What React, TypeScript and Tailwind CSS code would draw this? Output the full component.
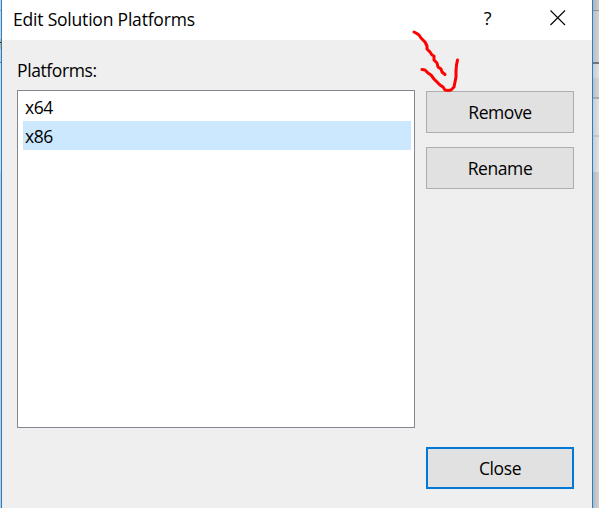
import type { ReactNode } from "react";

function DialogButton({ children, primary = false }: { children: ReactNode; primary?: boolean }) {
  return (
    <button
      className={`flex h-[42px] w-[148px] items-center justify-center bg-[#e1e1e1] pb-px ${
        primary ? "border-2 border-[#0078d7]" : "border border-[#adadad]"
      }`}
    >
      {children}
    </button>
  );
}

function LeftEdge() {
  return (
    <div className="flex w-px flex-col bg-[#c8c8c8]">
      <div className="h-[10px] bg-[#d0d0d0]" />
      <div className="h-px bg-[#a0a0a0]" />
      <div className="h-[28px] bg-[#d4d4d4]" />
      <div className="h-[3px] bg-[#d5b470]" />
      <div className="h-px bg-[#202020]" />
      <div className="h-[6px] bg-[#d5b470]" />
      <div className="h-[13px] bg-[#cccccc]" />
      <div className="h-px bg-[#77777f]" />
      <div className="h-[109px] bg-[#d8d9dc]" />
    </div>
  );
}

function RightEdge() {
  return (
    <div className="flex w-[6px] flex-col bg-linear-to-r from-[#b9b9b9] to-[#d2d0d1]">
      <div className="h-[10px] bg-linear-to-r from-[#b4b4b4] to-[#cccccc]" />
      <div className="h-px bg-[#929292]" />
      <div className="h-[51px] bg-linear-to-r from-[#bebebe] to-[#d2d2d2]" />
      <div className="h-[2px] bg-[#74747b]" />
      <div className="h-[14px] bg-linear-to-r from-[#cbcbcb] to-[#e0e0e0]" />
      <div className="h-[19px] bg-linear-to-r from-[#c0c0c0] to-[#d5d5d5]" />
      <div className="h-[2px] bg-[#aaaaaa]" />
      <div className="h-[36px] bg-linear-to-r from-[#cdcdcd] to-[#e2e2e2]" />
      <div className="h-[2px] bg-[#c5c5c5]" />
      <div className="h-[35px] bg-linear-to-r from-[#cdcdcd] to-[#e2e2e2]" />
    </div>
  );
}

export default function App() {
  return (
    <div className="relative flex h-[508px] w-[599px] overflow-hidden font-['Open_Sans','Noto_Sans',sans-serif] text-[17.5px] leading-6 tracking-[-0.4px] text-black">
      <LeftEdge />
      <main className="flex w-[592px] flex-col border-x border-[#1883d7] bg-[#efefef]">
        <header className="flex h-10 items-center justify-between bg-white pr-[26px] pl-[11px]">
          <h1 className="pb-0.5 tracking-[-0.2px]">Edit Solution Platforms</h1>
          <div className="flex items-center gap-[59px] pb-[5px]">
            <span className="text-[18px]">?</span>
            <svg className="mt-px" width="16" height="16" viewBox="0 0 16 16" fill="none" stroke="black" strokeWidth="1.1">
              <path d="M.5.5 15 15M15 .5.5 15" />
            </svg>
          </div>
        </header>
        <div className="flex flex-1 flex-col pt-[18px] pl-[15px]">
          <label className="h-8">Platforms:</label>
          <div className="flex gap-[11px]">
            <div className="h-[338px] w-[398px] border border-[#828790] bg-white py-[2px] pr-[3px] pl-[5px]">
              <ul>
                <li className="h-7 pt-[2px] pl-[2px]">x64</li>
                <li className="h-[29px] bg-[#cce8ff] pt-[3px] pl-[2px]">x86</li>
              </ul>
            </div>
            <div className="flex flex-col gap-[14px] pt-px">
              <DialogButton>Remove</DialogButton>
              <DialogButton>Rename</DialogButton>
            </div>
          </div>
          <div className="mt-[19px] flex justify-end pr-[18px]">
            <DialogButton primary>Close</DialogButton>
          </div>
        </div>
      </main>
      <RightEdge />
      <svg className="pointer-events-none absolute top-[25px] left-[405px]" width="65" height="75" viewBox="0 0 65 75" fill="none" stroke="#fe0000" strokeWidth="3" strokeLinecap="round" strokeLinejoin="round">
        <path d="M9 7 11 8 14 10 16 13 20 17 22 21 22 24 25 27 27 30 29 31 29 35 32 38 33 42 36 44 37 47 40 49.5" />
        <path d="M17 44.5 20 45 23 48 26 50 29 54 32 57 35 60 38 62 40 65 43 65.5 46 65 49 62 50 57 51 52 51 46 51.5 40 52.5 35" />
      </svg>
    </div>
  );
}
